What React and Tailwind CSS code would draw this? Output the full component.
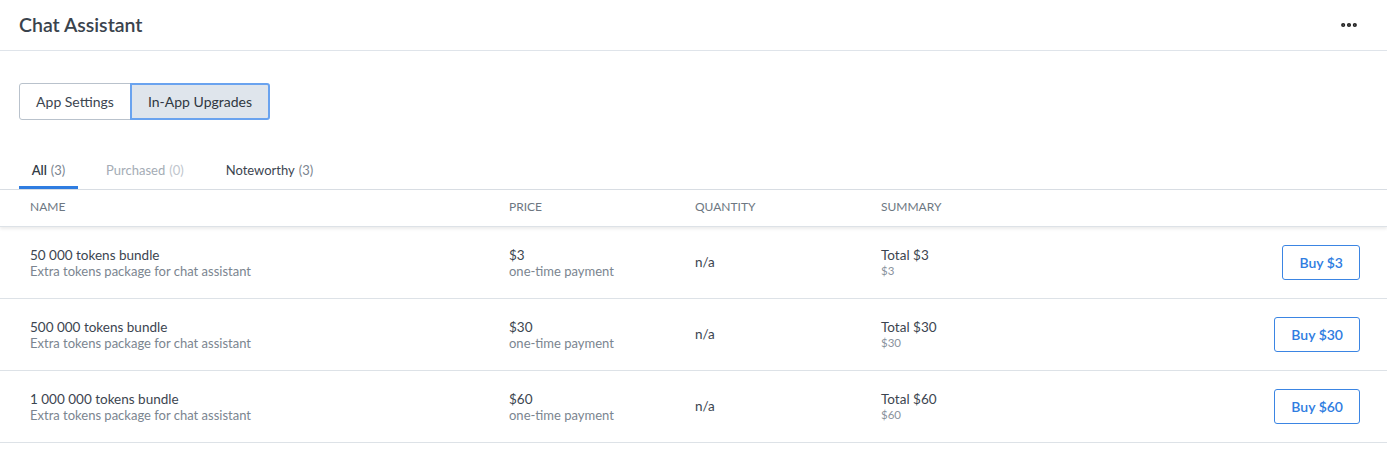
import { MoreHorizontal } from 'lucide-react';

const rows = [
  { name: '50 000 tokens bundle', price: '$3' },
  { name: '500 000 tokens bundle', price: '$30' },
  { name: '1 000 000 tokens bundle', price: '$60' },
];

export default function App() {
  return (
    <div className="w-[1387px] h-[464px] bg-white text-[#3c4550] font-['Lato','Noto_Sans',sans-serif] overflow-hidden">
      {/* header */}
      <div className="h-[51px] flex items-center justify-between pl-[19px] pr-[28px] border-b border-[#dfe4ea]">
        <h1 className="text-[19.5px] font-semibold text-[#3a434d]">Chat Assistant</h1>
        <MoreHorizontal size={20} strokeWidth={3} className="text-[#222]" />
      </div>

      {/* segmented control */}
      <div className="pl-[19px] pt-[32px] flex">
        <button className="h-[37px] w-[112px] text-[14px] text-[#3c4550] border border-[#b9c2cc] rounded-l-[3px] bg-white">App Settings</button>
        <button className="h-[37px] w-[140px] text-[14px] text-[#2f3842] border-2 border-[#6aa3ef] rounded-r-[3px] bg-[#dfe5ec] -ml-px">In-App Upgrades</button>
      </div>

      {/* tabs */}
      <div className="mt-[32px] flex border-b border-[#d9dee4] text-[13px]">
        <div className="ml-[19px] w-[59px] h-[37px] flex items-center justify-center border-b-[3px] border-[#2f7de1] pt-[3px] text-[#333c46] font-semibold">
          All <span className="ml-1 font-normal text-[#7b8590]">(3)</span>
        </div>
        <div className="ml-[28px] h-[37px] flex items-center text-[#a4acb5]">
          Purchased <span className="ml-1 text-[#c0c6cd]">(0)</span>
        </div>
        <div className="ml-[42px] h-[37px] flex items-center text-[#3c4550]">
          Noteworthy <span className="ml-1 text-[#7b8590]">(3)</span>
        </div>
      </div>

      {/* table header */}
      <div className="h-[37px] flex items-center pb-[3px] text-[12px] uppercase text-[#6d7782] shadow-[0_2px_3px_rgba(0,0,0,0.08)] border-b border-[#dde2e7] relative">
        <div className="pl-[30px] w-[509px]">Name</div>
        <div className="w-[186px]">Price</div>
        <div className="w-[186px]">Quantity</div>
        <div>Summary</div>
      </div>

      {rows.map((r) => (
        <div key={r.name} className="h-[72px] flex items-center border-b border-[#dde2e7]">
          <div className="pl-[30px] w-[509px] leading-[16px]">
            <div className="text-[13.5px] text-[#3c4550]">{r.name}</div>
            <div className="text-[13px] text-[#7b8590]">Extra tokens package for chat assistant</div>
          </div>
          <div className="w-[186px] leading-[16px]">
            <div className="text-[13.5px] text-[#3c4550]">{r.price}</div>
            <div className="text-[13px] text-[#7b8590]">one-time payment</div>
          </div>
          <div className="w-[186px] text-[13.5px] text-[#3c4550]">n/a</div>
          <div className="flex-1 leading-[16px]">
            <div className="text-[13.5px] text-[#3c4550]">Total {r.price}</div>
            <div className="text-[11.5px] text-[#8a939d]">{r.price}</div>
          </div>
          <button className="mr-[27px] h-[35px] px-[16px] text-[14px] font-semibold text-[#2f7de1] border border-[#3b85e3] rounded-[3px] bg-white">
            Buy {r.price}
          </button>
        </div>
      ))}
    </div>
  );
}
